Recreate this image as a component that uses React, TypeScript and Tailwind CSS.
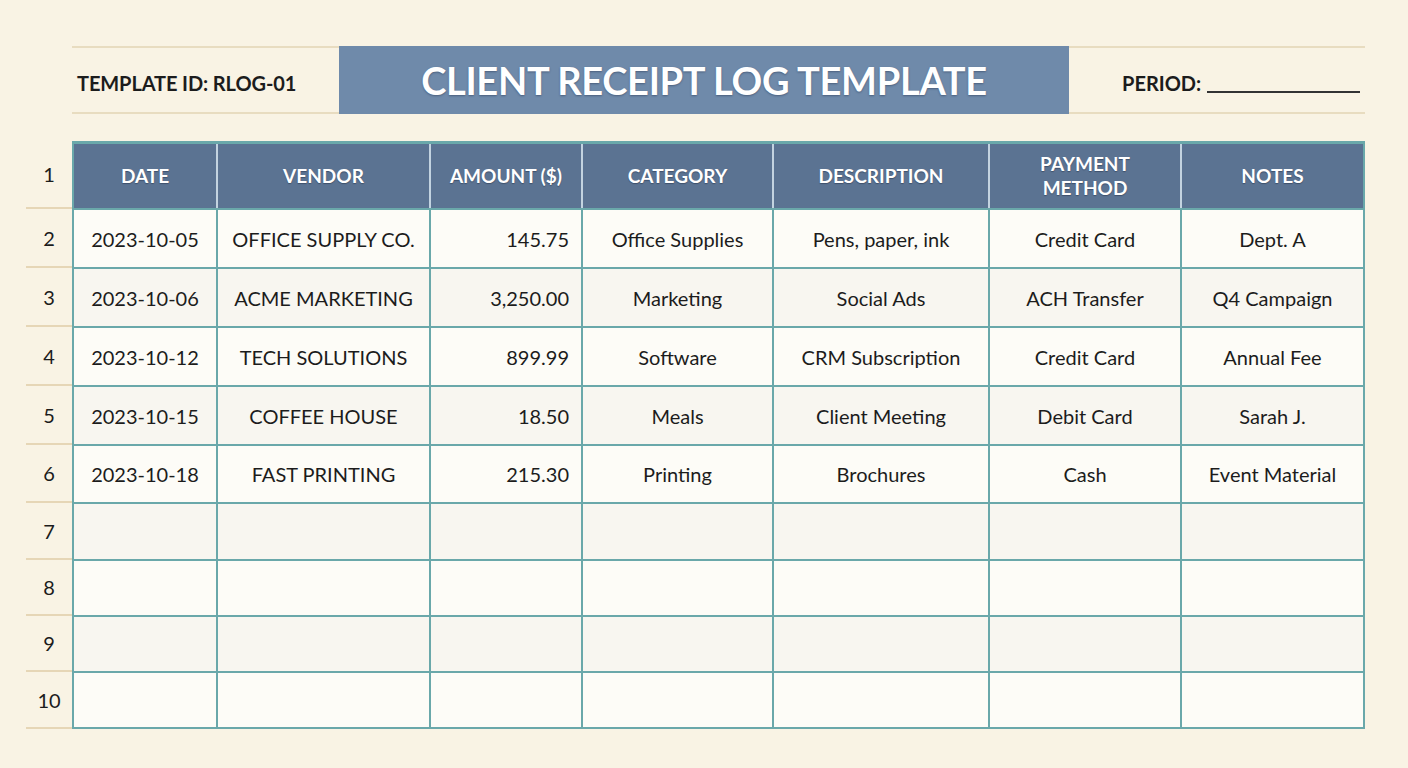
const cols = [
  { label: 'DATE', w: 'w-[142px]', align: 'justify-center' },
  { label: 'VENDOR', w: 'w-[213px]', align: 'justify-center' },
  { label: 'AMOUNT ($)', w: 'w-[152px]', align: 'justify-end pr-3' },
  { label: 'CATEGORY', w: 'w-[191px]', align: 'justify-center' },
  { label: 'DESCRIPTION', w: 'w-[216px]', align: 'justify-center' },
  { label: 'PAYMENT METHOD', w: 'w-[192px]', align: 'justify-center' },
  { label: 'NOTES', w: 'flex-1', align: 'justify-center' },
];

const rows: string[][] = [
  ['2023-10-05', 'OFFICE SUPPLY CO.', '145.75', 'Office Supplies', 'Pens, paper, ink', 'Credit Card', 'Dept. A'],
  ['2023-10-06', 'ACME MARKETING', '3,250.00', 'Marketing', 'Social Ads', 'ACH Transfer', 'Q4 Campaign'],
  ['2023-10-12', 'TECH SOLUTIONS', '899.99', 'Software', 'CRM Subscription', 'Credit Card', 'Annual Fee'],
  ['2023-10-15', 'COFFEE HOUSE', '18.50', 'Meals', 'Client Meeting', 'Debit Card', 'Sarah J.'],
  ['2023-10-18', 'FAST PRINTING', '215.30', 'Printing', 'Brochures', 'Cash', 'Event Material'],
  ['', '', '', '', '', '', ''],
  ['', '', '', '', '', '', ''],
  ['', '', '', '', '', '', ''],
  ['', '', '', '', '', '', ''],
];

// row heights incl. top border of each body row
const rowH = ['h-[59px]', 'h-[59px]', 'h-[59px]', 'h-[59px]', 'h-[58px]', 'h-[57px]', 'h-[56px]', 'h-[56px]', 'h-[56px]'];
const numH = ['h-[59px]', 'h-[59px]', 'h-[59px]', 'h-[59px]', 'h-[58px]', 'h-[57px]', 'h-[56px]', 'h-[56px]', 'h-[57px]'];

export default function App() {
  return (
    <div
      className="w-[1408px] h-[768px] overflow-hidden bg-[#f9f3e4] text-[#1c1c1c] pt-[46px] pl-[26px]"
      style={{ fontFamily: 'Lato, "Open Sans", sans-serif' }}
    >
      {/* title strip */}
      <div className="ml-[46px] w-[1293px] h-[68px] flex border-y-2 border-[#e8dcc0]">
        <div className="w-[267px] flex items-center pl-[5px] pt-[6px] text-[20px] font-bold tracking-[-0.1px]">
          TEMPLATE ID: RLOG-01
        </div>
        <div className="w-[730px] -my-[2px] bg-[#6f8aaa] flex items-center justify-center">
          <span className="text-white text-[38px] font-bold tracking-[-0.3px] [text-shadow:0_1px_2px_rgba(30,45,70,0.45)]">
            CLIENT RECEIPT LOG TEMPLATE
          </span>
        </div>
        <div className="flex-1 flex items-center pl-[53px] pt-[6px] text-[20px] font-bold">
          <span>PERIOD:</span>
          <span className="ml-[6px] w-[153px] h-[20px] border-b-2 border-[#333]" />
        </div>
      </div>

      {/* sheet */}
      <div className="mt-[27px] flex">
        {/* row numbers */}
        <div className="w-[46px] flex flex-col text-[20px]">
          <div className="h-[68px] flex items-center justify-center border-b-2 border-[#e6d6b6]">1</div>
          {numH.map((h, i) => (
            <div key={i} className={`${h} flex items-center justify-center border-b-2 border-[#e6d6b6]`}>
              {i + 2}
            </div>
          ))}
        </div>

        {/* table */}
        <div className="w-[1293px] border-x-2 border-t-[3px] border-b-2 border-[#6aa8aa]">
          <div className="h-[64px] flex bg-[#5b7392] text-white text-[19px] font-bold [text-shadow:0_1px_1px_rgba(20,30,50,0.4)]">
            {cols.map((c, i) => (
              <div
                key={c.label}
                className={`${c.w} ${i > 0 ? 'border-l-2 border-[#c3d3e0]' : ''} flex items-center justify-center text-center leading-[24px] px-2`}
              >
                {c.label === 'PAYMENT METHOD' ? (
                  <span>PAYMENT<br />METHOD</span>
                ) : (
                  c.label
                )}
              </div>
            ))}
          </div>
          {rows.map((r, ri) => (
            <div
              key={ri}
              className={`${rowH[ri]} flex border-t-2 border-[#6aa8aa] text-[20px] ${ri % 2 === 0 ? 'bg-[#fdfcf7]' : 'bg-[#f8f6f0]'}`}
            >
              {r.map((cell, ci) => (
                <div
                  key={ci}
                  className={`${cols[ci].w} ${ci > 0 ? 'border-l-2 border-[#6aa8aa]' : ''} flex items-center ${cols[ci].align} whitespace-nowrap`}
                >
                  {cell}
                </div>
              ))}
            </div>
          ))}
        </div>
      </div>
    </div>
  );
}
